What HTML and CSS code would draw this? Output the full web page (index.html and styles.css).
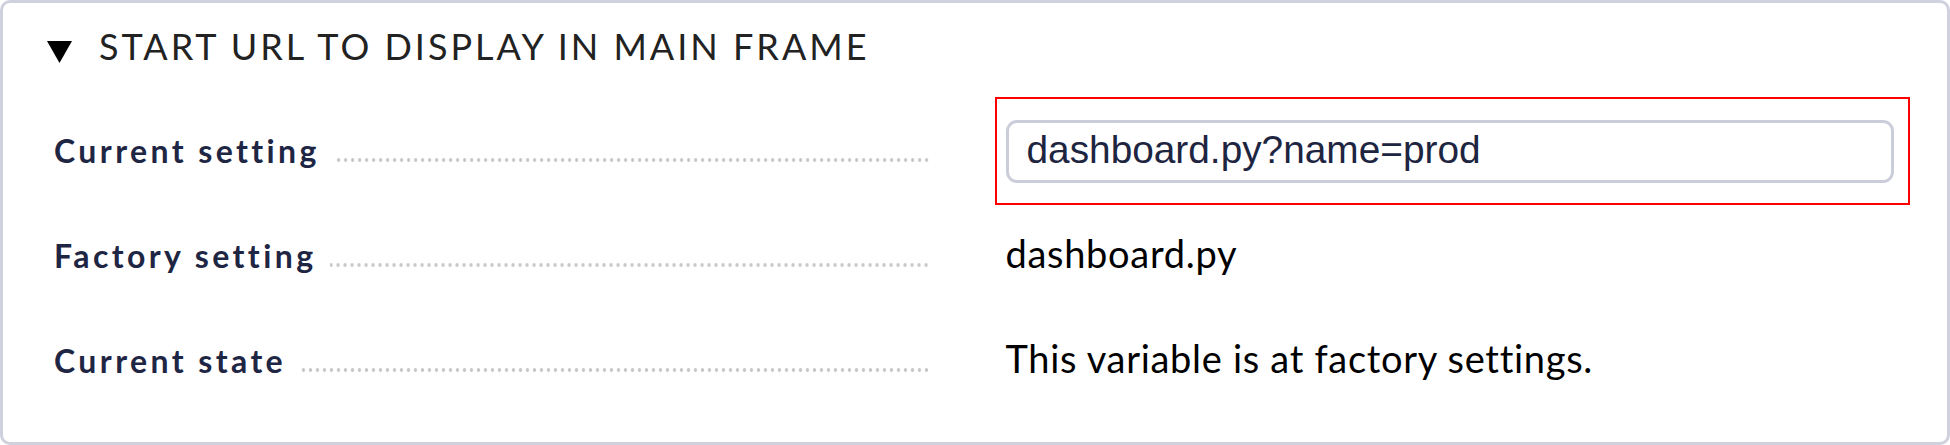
FILE: index.html
```html
<!DOCTYPE html>
<html lang="en">
<head>
<meta charset="utf-8">
<title>Start URL to display in main frame</title>
<link rel="stylesheet" href="styles.css">
</head>
<body>
<div class="panel">
  <div class="panel-head">
    <svg class="toggle" width="25" height="22" viewBox="0 0 25 22" aria-hidden="true"><polygon points="0,0 25,0 12.5,22" fill="#000"/></svg>
    <h2 class="title">START URL TO DISPLAY IN MAIN FRAME</h2>
  </div>
  <div class="settings">
    <div class="label"><span class="label-text">Current setting</span><span class="leader"></span></div>
    <div class="value value-edit"><input class="text-input" type="text" value="dashboard.py?name=prod"></div>

    <div class="label"><span class="label-text">Factory setting</span><span class="leader"></span></div>
    <div class="value value-text">dashboard.py</div>

    <div class="label"><span class="label-text">Current state</span><span class="leader"></span></div>
    <div class="value value-text">This variable is at factory settings.</div>
  </div>
</div>
</body>
</html>
```
FILE: styles.css
```css
html, body {
  margin: 0;
  padding: 0;
  background: #fff;
}

.panel {
  box-sizing: border-box;
  width: 1950px;
  height: 445px;
  border: 3px solid #cfd1de;
  border-radius: 10px;
  padding: 21px 37px 0 44px;
  font-family: "Lato", "Liberation Sans", sans-serif;
}

.panel-head {
  display: flex;
  align-items: flex-start;
}

.toggle {
  flex: none;
  margin-top: 17px;
}

.title {
  margin: 0 0 0 27px;
  font-size: 36px;
  font-weight: 400;
  line-height: 45px;
  letter-spacing: 3px;
  color: #222;
}

.settings {
  display: grid;
  grid-template-columns: 876px 915px;
  column-gap: 65px;
  grid-auto-rows: 105px;
  align-items: baseline;
  margin-top: 28px;
  padding-left: 7px;
}

.label {
  display: flex;
  align-items: baseline;
}

.label-text {
  font-size: 32px;
  font-weight: 700;
  letter-spacing: 3.4px;
  color: #1e2644;
  white-space: nowrap;
}

.leader {
  flex: 1;
  height: 6px;
  margin-left: 14px;
  background-image: radial-gradient(circle at center, #c8c8c8 1.5px, rgba(200,200,200,0) 2.1px);
  background-size: 7px 6px;
  background-repeat: repeat-x;
  background-position: right center;
}

.value-edit {
  display: flex;
  border: 2px solid #f00;
  padding: 21px 14px 20px 9px;
}

.text-input {
  box-sizing: border-box;
  width: 100%;
  height: 63px;
  margin: 0;
  border: 3px solid #cbcdda;
  border-radius: 11px;
  padding: 0 18px 4px 17.5px;
  font-family: "Liberation Sans", Arial, sans-serif;
  font-size: 38.8px;
  color: #1e2541;
  background: #fff;
  outline: none;
}

.value-text {
  padding: 27.5px 0 0 10.5px;
  font-size: 38px;
  letter-spacing: 0.7px;
  color: #000;
}
```
